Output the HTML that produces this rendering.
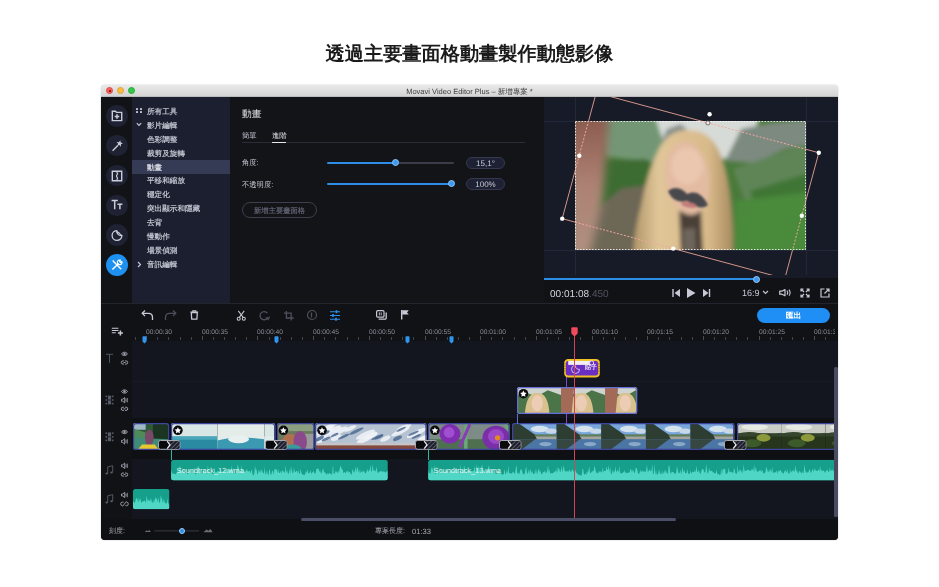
<!DOCTYPE html><html lang="zh-Hant"><head><meta charset="utf-8"><style>
*{margin:0;padding:0;box-sizing:border-box}
html,body{width:939px;height:587px;overflow:hidden;background:#fff}
body{position:relative;font-family:"Liberation Sans",sans-serif;text-rendering:geometricPrecision}
.abs{position:absolute}
.t{position:absolute;white-space:nowrap;line-height:1;-webkit-font-smoothing:antialiased;will-change:transform}
svg{position:absolute;overflow:visible}
</style></head><body>

<div class="t" style="left:0;width:939px;top:45.3px;text-align:center;font-size:19.2px;font-weight:bold;color:#1b1b1b">透過主要畫面格動畫製作動態影像</div>
<div class="abs" style="left:101px;top:85px;width:737px;height:455.3px;border-radius:4px;background:linear-gradient(#e0e0e0 0,#e0e0e0 10px,#111215 10px);box-shadow:0 0 1.5px rgba(0,0,0,0.3)"></div>
<div class="abs" style="left:101px;top:85px;width:737px;height:12px;border-radius:4px 4px 0 0;background:linear-gradient(#e9e9e9,#d4d4d4);border-bottom:1px solid #bcbcbc"></div>
<div class="abs" style="left:105.9px;top:87.3px;width:7px;height:7px;border-radius:50%;background:#fc605b;border:0.5px solid #de4a45"></div>
<div class="abs" style="left:117.2px;top:87.3px;width:7px;height:7px;border-radius:50%;background:#fdbc40;border:0.5px solid #dea236"></div>
<div class="abs" style="left:128.2px;top:87.3px;width:7px;height:7px;border-radius:50%;background:#34c84a;border:0.5px solid #27aa37"></div>
<div class="abs" style="left:108.6px;top:90px;width:2px;height:2px;border-radius:50%;background:#6a0a08"></div>
<div class="t" style="left:0;width:939px;top:87.6px;text-align:center;font-size:7.5px;color:#3d3d3d">Movavi Video Editor Plus – 新增專案 *</div>
<div class="abs" style="left:101px;top:97px;width:31px;height:206px;background:#121316"></div>
<div class="abs" style="left:132px;top:97px;width:98px;height:206px;background:#1c1f2f"></div>
<div class="abs" style="left:230px;top:97px;width:314px;height:206px;background:#131417"></div>
<div class="abs" style="left:544px;top:97px;width:294px;height:181px;background:#171a27"></div>
<div class="abs" style="left:544px;top:278px;width:294px;height:25px;background:#111215"></div>
<div class="abs" style="left:101px;top:303px;width:737px;height:1px;background:#23252e"></div>
<div class="abs" style="left:105.89999999999999px;top:104.8px;width:21.8px;height:21.8px;border-radius:50%;background:#1f2233"></div>
<svg style="left:108.8px;top:107.7px" width="16" height="16" viewBox="0 0 16 16"><path d="M3.3 3.2h3.2l1 1.2h5.2v8.2H3.3z" fill="none" stroke="#c9ccd9" stroke-width="1.4"/><path d="M8 6.2v4.6M5.7 8.5h4.6" stroke="#c9ccd9" stroke-width="1.6"/></svg>
<div class="abs" style="left:105.89999999999999px;top:134.7px;width:21.8px;height:21.8px;border-radius:50%;background:#1f2233"></div>
<svg style="left:108.8px;top:137.6px" width="16" height="16" viewBox="0 0 16 16"><polygon points="11.28,2.27 11.71,4.59 13.98,5.21 11.91,6.34 12.01,8.69 10.30,7.07 8.09,7.90 9.11,5.77 7.64,3.93 9.98,4.24" fill="#c9ccd9"/><path d="M8.8 7.6L3.6 12.8" stroke="#c9ccd9" stroke-width="1.4"/></svg>
<div class="abs" style="left:105.89999999999999px;top:164.6px;width:21.8px;height:21.8px;border-radius:50%;background:#1f2233"></div>
<svg style="left:108.8px;top:167.5px" width="16" height="16" viewBox="0 0 16 16"><path d="M3.3 3.2h9.4v9.6H3.3z" fill="none" stroke="#c9ccd9" stroke-width="1.4"/><path d="M7.4 3.2l1.2 2.4-1.2 2.4 1.2 2.4-1.2 2.4" fill="none" stroke="#c9ccd9" stroke-width="1.2"/></svg>
<div class="abs" style="left:105.89999999999999px;top:194.49999999999997px;width:21.8px;height:21.8px;border-radius:50%;background:#1f2233"></div>
<svg style="left:108.8px;top:197.39999999999998px" width="16" height="16" viewBox="0 0 16 16"><path d="M2.6 3.6h6.2M5.7 3.6v8.6M8.4 7.2h5M10.9 7.2v5" fill="none" stroke="#c9ccd9" stroke-width="1.5"/></svg>
<div class="abs" style="left:105.89999999999999px;top:224.4px;width:21.8px;height:21.8px;border-radius:50%;background:#1f2233"></div>
<svg style="left:108.8px;top:227.3px" width="16" height="16" viewBox="0 0 16 16"><path d="M12.9 8.6A4.9 4.9 0 1 1 7.6 3.6" fill="none" stroke="#c9ccd9" stroke-width="1.3"/><path d="M7.6 3.6C7.4 6.6 9.8 9 12.9 8.6C11.8 7.9 11 7.2 10.4 6.2C9.2 6 8.2 5 7.6 3.6z" fill="none" stroke="#c9ccd9" stroke-width="1.2" stroke-linejoin="round"/></svg>
<div class="abs" style="left:105.89999999999999px;top:254.29999999999998px;width:21.8px;height:21.8px;border-radius:50%;background:#1e90f0"></div>
<svg style="left:108.8px;top:257.2px" width="16" height="16" viewBox="0 0 16 16"><path d="M3.6 3.6l8.6 8.6" stroke="#ffffff" stroke-width="1.4"/><path d="M9.6 6.4L3.4 12.6" stroke="#ffffff" stroke-width="1.4"/><path d="M12.9 4.6A2.3 2.3 0 1 1 11.4 3.1L10.6 4.6 11.4 5.4z" fill="none" stroke="#ffffff" stroke-width="1.2" stroke-linejoin="round"/></svg>
<div class="t" style="left:147.3px;top:107.89999999999999px;font-size:7.6px;color:#bcbfcb;font-weight:700">所有工具</div>
<div class="abs" style="left:136.2px;top:107.8px;width:2.1px;height:2.1px;background:#c8cad6;border-radius:0.4px"></div>
<div class="abs" style="left:136.2px;top:111.3px;width:2.1px;height:2.1px;background:#c8cad6;border-radius:0.4px"></div>
<div class="abs" style="left:139.7px;top:107.8px;width:2.1px;height:2.1px;background:#c8cad6;border-radius:0.4px"></div>
<div class="abs" style="left:139.7px;top:111.3px;width:2.1px;height:2.1px;background:#c8cad6;border-radius:0.4px"></div>
<div class="t" style="left:147.3px;top:121.8px;font-size:7.6px;color:#bcbfcb;font-weight:700">影片編輯</div>
<svg style="left:136.2px;top:122.3px" width="6" height="5" viewBox="0 0 6 5"><path d="M0.8 1.2l2.2 2.2 2.2-2.2" fill="none" stroke="#c8cad6" stroke-width="1.2"/></svg>
<div class="t" style="left:147.3px;top:135.70000000000002px;font-size:7.6px;color:#bcbfcb;font-weight:700">色彩調整</div>
<div class="t" style="left:147.3px;top:149.60000000000002px;font-size:7.6px;color:#bcbfcb;font-weight:700">裁剪及旋轉</div>
<div class="abs" style="left:132px;top:160.39999999999998px;width:98px;height:13.6px;background:#353b54"></div>
<div class="t" style="left:147.3px;top:163.5px;font-size:7.6px;color:#d0d2dc;font-weight:700">動畫</div>
<div class="t" style="left:147.3px;top:177.4px;font-size:7.6px;color:#bcbfcb;font-weight:700">平移和縮放</div>
<div class="t" style="left:147.3px;top:191.3px;font-size:7.6px;color:#bcbfcb;font-weight:700">穩定化</div>
<div class="t" style="left:147.3px;top:205.2px;font-size:7.6px;color:#bcbfcb;font-weight:700">突出顯示和隱藏</div>
<div class="t" style="left:147.3px;top:219.10000000000002px;font-size:7.6px;color:#bcbfcb;font-weight:700">去背</div>
<div class="t" style="left:147.3px;top:233.0px;font-size:7.6px;color:#bcbfcb;font-weight:700">慢動作</div>
<div class="t" style="left:147.3px;top:246.9px;font-size:7.6px;color:#bcbfcb;font-weight:700">場景偵測</div>
<div class="t" style="left:147.3px;top:260.8px;font-size:7.6px;color:#bcbfcb;font-weight:700">音訊編輯</div>
<svg style="left:136px;top:261.0px" width="7" height="7" viewBox="0 0 7 7"><path d="M2 1l2.5 2.5L2 6" fill="none" stroke="#c3c6d2" stroke-width="1.2"/></svg>
<div class="t" style="left:241.7px;top:110.1px;font-size:9.75px;color:#e6e7ec;font-weight:500">動畫</div>
<div class="t" style="left:241.7px;top:132.2px;font-size:7.3px;color:#c3c6d2;font-weight:500">簡單</div>
<div class="t" style="left:271.9px;top:132.2px;font-size:7.3px;color:#e6e7ec;font-weight:500">進階</div>
<div class="abs" style="left:241.7px;top:142px;width:283.3px;height:1.2px;background:#2a2d38"></div>
<div class="abs" style="left:271.9px;top:141.6px;width:14.2px;height:1.8px;background:#e6e7ec"></div>
<div class="t" style="left:241.7px;top:159.2px;font-size:7.3px;color:#c3c6d2;font-weight:500">角度:</div>
<div class="t" style="left:241.7px;top:180.6px;font-size:7.3px;color:#c3c6d2;font-weight:500">不透明度:</div>
<div class="abs" style="left:326.6px;top:161.6px;width:69px;height:2px;background:#2c8ce6;border-radius:1px"></div>
<div class="abs" style="left:395.5px;top:161.6px;width:58.7px;height:2px;background:#3a3c48;border-radius:1px"></div>
<div class="abs" style="left:392px;top:159.1px;width:7px;height:7px;background:#3d9af0;border-radius:50%;border:1px solid #8cc4f8"></div>
<div class="abs" style="left:326.6px;top:182.6px;width:124.6px;height:2px;background:#2c8ce6;border-radius:1px"></div>
<div class="abs" style="left:447.7px;top:180.1px;width:7px;height:7px;background:#3d9af0;border-radius:50%;border:1px solid #8cc4f8"></div>
<div class="abs" style="left:465.8px;top:157.2px;width:39px;height:11.5px;border-radius:6px;background:#1e2134;border:1px solid #363a50"></div>
<div class="t" style="left:465.8px;width:39px;text-align:center;top:159.5px;font-size:8px;color:#c8cbd6">15,1°</div>
<div class="abs" style="left:465.8px;top:178.3px;width:39px;height:11.5px;border-radius:6px;background:#1e2134;border:1px solid #363a50"></div>
<div class="t" style="left:465.8px;width:39px;text-align:center;top:180.60000000000002px;font-size:8px;color:#c8cbd6">100%</div>
<div class="abs" style="left:241.6px;top:202.2px;width:75.2px;height:15.9px;border-radius:8px;border:1px solid #3c3f4c"></div>
<div class="t" style="left:241.6px;top:207.2px;font-size:7.3px;color:#585c6a;font-weight:700"><span style="display:inline-block;width:75.2px;text-align:center">新增主要畫面格</span></div>
<div class="abs" style="left:575px;top:97px;width:1px;height:178px;background:#22273a"></div>
<div class="abs" style="left:806px;top:97px;width:1px;height:178px;background:#22273a"></div>
<div class="abs" style="left:544px;top:121px;width:294px;height:1px;background:#22273a"></div>
<div class="abs" style="left:544px;top:250px;width:294px;height:1px;background:#22273a"></div>
<svg style="left:575px;top:121px" width="231" height="129" viewBox="0 0 231 129"><defs>
<filter id="bl1" x="-20%" y="-20%" width="140%" height="140%"><feGaussianBlur stdDeviation="2"/></filter>
<filter id="bl2" x="-50%" y="-20%" width="200%" height="140%"><feGaussianBlur stdDeviation="4"/></filter>
<filter id="bl0" x="-20%" y="-20%" width="140%" height="140%"><feGaussianBlur stdDeviation="1"/></filter>
<clipPath id="imgc"><rect width="231" height="129"/></clipPath></defs>
<g clip-path="url(#imgc)">
<rect width="231" height="129" fill="#4a7a3a"/>
<defs><linearGradient id="hairg" x1="0" y1="0" x2="1" y2="0"><stop offset="0" stop-color="#b09468"/><stop offset="0.25" stop-color="#e0c698"/><stop offset="0.75" stop-color="#d8ba8a"/><stop offset="1" stop-color="#a88a60"/></linearGradient>
<linearGradient id="handg" x1="0" y1="0" x2="0" y2="1"><stop offset="0" stop-color="#8a5a4e"/><stop offset="0.5" stop-color="#ad8274"/><stop offset="1" stop-color="#b09080"/></linearGradient></defs>
<g filter="url(#bl1)">
<path d="M70 -5 L185 -5 L172 32 L140 40 L92 36 Z" fill="#d7dbd7"/>
<path d="M82 30 L92 8 L106 3 L118 14 L116 32 Z" fill="#848e8a"/>
<path d="M20 -5 L80 -5 L96 45 L70 40 L30 35 Z" fill="#739774"/>
<path d="M25 40 L70 38 L96 50 L96 105 L25 110 Z" fill="#3e6c31"/>
<path d="M150 40 L166 8 L195 2 L240 -2 L240 22 L210 28 L180 42 Z" fill="#7d8a80"/>
<path d="M158 48 L240 20 L240 70 L170 80 Z" fill="#5f8556"/><path d="M175 70 L240 50 L240 100 L190 110 Z" fill="#3f7636"/>
<path d="M160 80 L240 70 L240 135 L160 135 Z" fill="#4a8a3a"/>
<path d="M8 135 L20 90 L46 68 L72 64 L78 135 Z" fill="#6d6856"/>
<path d="M111 9 C128 9 137 16 143 28 C150 42 154 60 156 80 C158 100 159 118 158 135 L58 135 C59 115 62 100 66 85 C70 65 74 48 82 32 C88 18 98 9 111 9 Z" fill="url(#hairg)"/>
<path d="M104 90 L126 88 L128 135 L106 135 Z" fill="#4c4038"/>
<path d="M108 108 L120 107 L121 135 L109 135 Z" fill="#6e665c"/>
<ellipse cx="112.5" cy="57" rx="22" ry="37" transform="rotate(-8 112.5 57)" fill="#e3bba2"/>
<ellipse cx="112" cy="45" rx="16" ry="18" fill="#ebc7b0"/>
</g>
<g filter="url(#bl0)">
<path d="M93 70 C100 64 108 68 112 73 C118 70 126 70 133 84 C125 90 118 84 112 80 C105 82 97 80 93 70 Z" fill="#4a4a4d"/>
<ellipse cx="114" cy="84" rx="8" ry="2.6" transform="rotate(10 114 84)" fill="#c27a78"/>
</g>
<g filter="url(#bl2)">
<path d="M-5 -5 L34 -5 C33 20 30 50 27 80 C24 100 18 118 15 135 L-5 135 Z" fill="url(#handg)"/>
</g>
<rect x="0.5" y="0.5" width="230" height="128" fill="none" stroke="rgba(255,255,255,0.8)" stroke-width="1" stroke-dasharray="1.5 1.5"/>
</g></svg>
<svg style="left:544px;top:97px" width="294" height="181" viewBox="544 97 294 181"><defs><clipPath id="pc"><rect x="544" y="97" width="294" height="178"/></clipPath>
<mask id="outimg"><rect x="544" y="97" width="294" height="181" fill="#fff"/><rect x="575" y="121" width="231" height="129" fill="#000"/></mask>
<mask id="inimg"><rect x="575" y="121" width="231" height="129" fill="#fff"/></mask></defs>
<g clip-path="url(#pc)" fill="none">
<polygon mask="url(#outimg)" points="596.2,92.75 818.8,152.75 784.8,278.65 562.2,218.65" stroke="#e7a394" stroke-width="0.9"/>
<polygon mask="url(#inimg)" points="596.2,92.75 818.8,152.75 784.8,278.65 562.2,218.65" stroke="#f0a8a0" stroke-width="1" stroke-dasharray="2 1.6"/>
</g>
<g fill="#fff"><circle cx="579.3" cy="155.7" r="2.2"/><circle cx="562.2" cy="218.65" r="2.2"/><circle cx="673.2" cy="248.6" r="2.2"/><circle cx="801.8" cy="215.7" r="2.2"/><circle cx="818.8" cy="152.75" r="2.2"/><circle cx="709.6" cy="114.3" r="2.2"/></g>
<circle cx="707.9" cy="122.9" r="2.1" fill="#e8e8e8" stroke="#444" stroke-width="0.7"/>
</svg>
<div class="abs" style="left:544px;top:278px;width:212px;height:2px;background:#2d8fe8"></div>
<div class="abs" style="left:756px;top:278px;width:82px;height:2px;background:#111215"></div>
<div class="abs" style="left:752.5px;top:276px;width:7px;height:7px;background:#3d9af0;border-radius:50%;border:1px solid #9ccaf5"></div>
<div class="t" style="left:549.8px;top:289.8px;font-size:10.05px;color:#d0d3de">00:01:08<span style="color:#50535f">.450</span></div>
<svg style="left:672px;top:288px" width="40" height="10" viewBox="0 0 40 10"><path d="M1 1v8" stroke="#c7cad6" stroke-width="1.4"/><path d="M8 1L2.5 5 8 9z" fill="#c7cad6"/><path d="M15 0L23.5 5 15 10z" fill="#c7cad6"/><path d="M31 1L36.5 5 31 9z" fill="#c7cad6"/><path d="M37.5 1v8" stroke="#c7cad6" stroke-width="1.4"/></svg>
<div class="t" style="left:742.4px;top:288.6px;font-size:9px;color:#c7cad6;">16:9</div>
<svg style="left:762px;top:290px" width="7" height="5" viewBox="0 0 7 5"><path d="M1 1l2.5 2.5L6 1" fill="none" stroke="#c7cad6" stroke-width="1.1"/></svg>
<svg style="left:778.6px;top:289.2px" width="12" height="7.4" viewBox="0 0 12 7.4"><path d="M0.7 2.2h2.2L6 0.6v6.2L2.9 5.2H0.7z" fill="none" stroke="#c7cad6" stroke-width="1.2" stroke-linejoin="round"/><path d="M8 1.6c.8 1.2.8 3 0 4.2M10 0.6c1.3 1.8 1.3 4.4 0 6.2" fill="none" stroke="#c7cad6" stroke-width="1.1"/></svg>
<svg style="left:800px;top:288px" width="10" height="10" viewBox="0 0 10 10"><path d="M1 3.5V1h2.5M6.5 1H9v2.5M9 6.5V9H6.5M3.5 9H1V6.5M1 1l3 3M9 1L6 4M9 9L6 6M1 9l3-3" fill="none" stroke="#c7cad6" stroke-width="1.2"/></svg>
<svg style="left:820px;top:288px" width="10" height="10" viewBox="0 0 10 10"><path d="M4.5 1H1v8h8V5.5M6 1h3v3M9 1L4.5 5.5" fill="none" stroke="#c7cad6" stroke-width="1.2"/></svg>
<svg style="left:141px;top:309px" width="13" height="12" viewBox="0 0 13 12"><path d="M4 1.5L1.2 4.3 4 7.1" fill="none" stroke="#c7cad6" stroke-width="1.3"/><path d="M1.5 4.3H7.5c2.5 0 4 1.8 4 4V11" fill="none" stroke="#c7cad6" stroke-width="1.3"/></svg>
<svg style="left:164px;top:309px" width="13" height="12" viewBox="0 0 13 12"><path d="M9 1.5l2.8 2.8L9 7.1" fill="none" stroke="#4d505c" stroke-width="1.3"/><path d="M11.5 4.3H5.5c-2.5 0-4 1.8-4 4V11" fill="none" stroke="#4d505c" stroke-width="1.3"/></svg>
<svg style="left:190.2px;top:310px" width="8.6" height="10" viewBox="0 0 8.6 10"><path d="M0.4 2h7.8M2.8 2V0.8h3V2" fill="none" stroke="#c7cad6" stroke-width="1.1"/><path d="M1.3 2.6h6l-.4 6.6H1.7z" fill="none" stroke="#c7cad6" stroke-width="1.3" stroke-linejoin="round"/></svg>
<svg style="left:236px;top:309.5px" width="10.5" height="11" viewBox="0 0 12 13"><path d="M2.5 1l6 8M9.5 1l-6 8" stroke="#c7cad6" stroke-width="1.2"/><circle cx="3" cy="10.3" r="1.8" fill="none" stroke="#c7cad6" stroke-width="1.2"/><circle cx="9" cy="10.3" r="1.8" fill="none" stroke="#c7cad6" stroke-width="1.2"/></svg>
<svg style="left:259.2px;top:311px" width="11" height="9.5" viewBox="0 0 11 9.5"><path d="M8.9 6.2A4.1 4.1 0 1 1 8.4 2.2" fill="none" stroke="#4d505c" stroke-width="1.3"/><path d="M6.6 6.4L9 8.6 10.6 5.6" fill="none" stroke="#4d505c" stroke-width="1.2"/></svg>
<svg style="left:284px;top:310.6px" width="10" height="9.4" viewBox="0 0 10 9.4"><path d="M2.4 0v7h7.4M0 2.2h7.2v7.2" fill="none" stroke="#4d505c" stroke-width="1.3"/></svg>
<svg style="left:306px;top:309px" width="12" height="12" viewBox="0 0 12 12"><circle cx="6" cy="6" r="4.5" fill="none" stroke="#4d505c" stroke-width="1.2"/><path d="M5.5 3.5v5" stroke="#4d505c" stroke-width="1.2"/></svg>
<svg style="left:330px;top:309.5px" width="10" height="11" viewBox="0 0 10 11"><path d="M0 1.8h10M0 5.5h10M0 9.2h10" stroke="#2d8fe8" stroke-width="1.1"/><path d="M6.5 0.3v3M3 4v3M6 7.7v3" stroke="#2d8fe8" stroke-width="1.6"/></svg>
<svg style="left:376px;top:310.2px" width="11" height="10" viewBox="0 0 11 10"><rect x="0.6" y="0.6" width="7.4" height="6.6" rx="1.2" fill="none" stroke="#c7cad6" stroke-width="1.2"/><path d="M2.6 9.2h6.4a1.2 1.2 0 0 0 1.2-1.2V2.6" fill="none" stroke="#c7cad6" stroke-width="1.3"/><path d="M3.4 2.4v3M5.2 2.4v3" stroke="#c7cad6" stroke-width="0.9"/></svg>
<svg style="left:401px;top:310.2px" width="8" height="9.4" viewBox="0 0 8 9.4"><path d="M0.7 0v9.4" stroke="#c7cad6" stroke-width="1.4"/><path d="M1.2 0.3h6.6L6 2.4 7.8 4.6H1.2z" fill="#c7cad6"/></svg>
<div class="abs" style="left:756.7px;top:308.1px;width:72.9px;height:15px;border-radius:8px;background:#1f8ef5"></div>
<div class="t" style="left:757.2px;width:72.9px;text-align:center;top:312px;font-size:7.8px;color:#fff;font-weight:700">匯出</div>
<svg style="left:0;top:0" width="939" height="587" viewBox="0 0 939 587"><path d="M111.8 328.3h6.6M111.8 330.5h6.6M111.8 332.8h4" stroke="#c7cad6" stroke-width="1.1"/><path d="M120.4 330.4v5M117.9 332.9h5" stroke="#c7cad6" stroke-width="1.5"/></svg>
<div class="abs" style="left:0;top:0;width:939px;height:587px;clip-path:inset(320px 104px 246px 132px)">
<div class="abs" style="left:134.96px;top:336.6px;width:1px;height:3.8px;background:#41444e"></div>
<div class="abs" style="left:146.1px;top:335.6px;width:1px;height:4.8px;background:#4a4d58"></div>
<div class="abs" style="left:157.24px;top:336.6px;width:1px;height:3.8px;background:#41444e"></div>
<div class="abs" style="left:168.37px;top:336.6px;width:1px;height:3.8px;background:#41444e"></div>
<div class="abs" style="left:179.51px;top:336.6px;width:1px;height:3.8px;background:#41444e"></div>
<div class="abs" style="left:190.64px;top:336.6px;width:1px;height:3.8px;background:#41444e"></div>
<div class="abs" style="left:201.78px;top:335.6px;width:1px;height:4.8px;background:#4a4d58"></div>
<div class="abs" style="left:212.92px;top:336.6px;width:1px;height:3.8px;background:#41444e"></div>
<div class="abs" style="left:224.05px;top:336.6px;width:1px;height:3.8px;background:#41444e"></div>
<div class="abs" style="left:235.19px;top:336.6px;width:1px;height:3.8px;background:#41444e"></div>
<div class="abs" style="left:246.32px;top:336.6px;width:1px;height:3.8px;background:#41444e"></div>
<div class="abs" style="left:257.46px;top:335.6px;width:1px;height:4.8px;background:#4a4d58"></div>
<div class="abs" style="left:268.6px;top:336.6px;width:1px;height:3.8px;background:#41444e"></div>
<div class="abs" style="left:279.73px;top:336.6px;width:1px;height:3.8px;background:#41444e"></div>
<div class="abs" style="left:290.87px;top:336.6px;width:1px;height:3.8px;background:#41444e"></div>
<div class="abs" style="left:302.0px;top:336.6px;width:1px;height:3.8px;background:#41444e"></div>
<div class="abs" style="left:313.14px;top:335.6px;width:1px;height:4.8px;background:#4a4d58"></div>
<div class="abs" style="left:324.28px;top:336.6px;width:1px;height:3.8px;background:#41444e"></div>
<div class="abs" style="left:335.41px;top:336.6px;width:1px;height:3.8px;background:#41444e"></div>
<div class="abs" style="left:346.55px;top:336.6px;width:1px;height:3.8px;background:#41444e"></div>
<div class="abs" style="left:357.68px;top:336.6px;width:1px;height:3.8px;background:#41444e"></div>
<div class="abs" style="left:368.82px;top:335.6px;width:1px;height:4.8px;background:#4a4d58"></div>
<div class="abs" style="left:379.96px;top:336.6px;width:1px;height:3.8px;background:#41444e"></div>
<div class="abs" style="left:391.09px;top:336.6px;width:1px;height:3.8px;background:#41444e"></div>
<div class="abs" style="left:402.23px;top:336.6px;width:1px;height:3.8px;background:#41444e"></div>
<div class="abs" style="left:413.36px;top:336.6px;width:1px;height:3.8px;background:#41444e"></div>
<div class="abs" style="left:424.5px;top:335.6px;width:1px;height:4.8px;background:#4a4d58"></div>
<div class="abs" style="left:435.64px;top:336.6px;width:1px;height:3.8px;background:#41444e"></div>
<div class="abs" style="left:446.77px;top:336.6px;width:1px;height:3.8px;background:#41444e"></div>
<div class="abs" style="left:457.91px;top:336.6px;width:1px;height:3.8px;background:#41444e"></div>
<div class="abs" style="left:469.04px;top:336.6px;width:1px;height:3.8px;background:#41444e"></div>
<div class="abs" style="left:480.18px;top:335.6px;width:1px;height:4.8px;background:#4a4d58"></div>
<div class="abs" style="left:491.32px;top:336.6px;width:1px;height:3.8px;background:#41444e"></div>
<div class="abs" style="left:502.45px;top:336.6px;width:1px;height:3.8px;background:#41444e"></div>
<div class="abs" style="left:513.59px;top:336.6px;width:1px;height:3.8px;background:#41444e"></div>
<div class="abs" style="left:524.72px;top:336.6px;width:1px;height:3.8px;background:#41444e"></div>
<div class="abs" style="left:535.86px;top:335.6px;width:1px;height:4.8px;background:#4a4d58"></div>
<div class="abs" style="left:547.0px;top:336.6px;width:1px;height:3.8px;background:#41444e"></div>
<div class="abs" style="left:558.13px;top:336.6px;width:1px;height:3.8px;background:#41444e"></div>
<div class="abs" style="left:569.27px;top:336.6px;width:1px;height:3.8px;background:#41444e"></div>
<div class="abs" style="left:580.4px;top:336.6px;width:1px;height:3.8px;background:#41444e"></div>
<div class="abs" style="left:591.54px;top:335.6px;width:1px;height:4.8px;background:#4a4d58"></div>
<div class="abs" style="left:602.68px;top:336.6px;width:1px;height:3.8px;background:#41444e"></div>
<div class="abs" style="left:613.81px;top:336.6px;width:1px;height:3.8px;background:#41444e"></div>
<div class="abs" style="left:624.95px;top:336.6px;width:1px;height:3.8px;background:#41444e"></div>
<div class="abs" style="left:636.08px;top:336.6px;width:1px;height:3.8px;background:#41444e"></div>
<div class="abs" style="left:647.22px;top:335.6px;width:1px;height:4.8px;background:#4a4d58"></div>
<div class="abs" style="left:658.36px;top:336.6px;width:1px;height:3.8px;background:#41444e"></div>
<div class="abs" style="left:669.49px;top:336.6px;width:1px;height:3.8px;background:#41444e"></div>
<div class="abs" style="left:680.63px;top:336.6px;width:1px;height:3.8px;background:#41444e"></div>
<div class="abs" style="left:691.76px;top:336.6px;width:1px;height:3.8px;background:#41444e"></div>
<div class="abs" style="left:702.9px;top:335.6px;width:1px;height:4.8px;background:#4a4d58"></div>
<div class="abs" style="left:714.04px;top:336.6px;width:1px;height:3.8px;background:#41444e"></div>
<div class="abs" style="left:725.17px;top:336.6px;width:1px;height:3.8px;background:#41444e"></div>
<div class="abs" style="left:736.31px;top:336.6px;width:1px;height:3.8px;background:#41444e"></div>
<div class="abs" style="left:747.44px;top:336.6px;width:1px;height:3.8px;background:#41444e"></div>
<div class="abs" style="left:758.58px;top:335.6px;width:1px;height:4.8px;background:#4a4d58"></div>
<div class="abs" style="left:769.72px;top:336.6px;width:1px;height:3.8px;background:#41444e"></div>
<div class="abs" style="left:780.85px;top:336.6px;width:1px;height:3.8px;background:#41444e"></div>
<div class="abs" style="left:791.99px;top:336.6px;width:1px;height:3.8px;background:#41444e"></div>
<div class="abs" style="left:803.12px;top:336.6px;width:1px;height:3.8px;background:#41444e"></div>
<div class="abs" style="left:814.26px;top:335.6px;width:1px;height:4.8px;background:#4a4d58"></div>
<div class="abs" style="left:825.4px;top:336.6px;width:1px;height:3.8px;background:#41444e"></div>
<div class="t" style="left:146.1px;top:330.1px;font-size:6.65px;color:#8d909c;">00:00:30</div>
<div class="t" style="left:201.78px;top:330.1px;font-size:6.65px;color:#8d909c;">00:00:35</div>
<div class="t" style="left:257.46px;top:330.1px;font-size:6.65px;color:#8d909c;">00:00:40</div>
<div class="t" style="left:313.14px;top:330.1px;font-size:6.65px;color:#8d909c;">00:00:45</div>
<div class="t" style="left:368.82px;top:330.1px;font-size:6.65px;color:#8d909c;">00:00:50</div>
<div class="t" style="left:424.5px;top:330.1px;font-size:6.65px;color:#8d909c;">00:00:55</div>
<div class="t" style="left:480.18px;top:330.1px;font-size:6.65px;color:#8d909c;">00:01:00</div>
<div class="t" style="left:535.86px;top:330.1px;font-size:6.65px;color:#8d909c;">00:01:05</div>
<div class="t" style="left:591.54px;top:330.1px;font-size:6.65px;color:#8d909c;">00:01:10</div>
<div class="t" style="left:647.22px;top:330.1px;font-size:6.65px;color:#8d909c;">00:01:15</div>
<div class="t" style="left:702.9px;top:330.1px;font-size:6.65px;color:#8d909c;">00:01:20</div>
<div class="t" style="left:758.58px;top:330.1px;font-size:6.65px;color:#8d909c;">00:01:25</div>
<div class="t" style="left:814.26px;top:330.1px;font-size:6.65px;color:#8d909c;">00:01:30</div>
<div class="t" style="left:869.94px;top:330.1px;font-size:6.65px;color:#8d909c;">00:01:35</div>
</div>
<div class="abs" style="left:132px;top:341px;width:706px;height:178px;background:#14161f"></div>
<div class="abs" style="left:101px;top:341px;width:31px;height:178px;background:#111215"></div>
<div class="abs" style="left:132px;top:380.5px;width:706px;height:1px;background:#181a24"></div>
<div class="abs" style="left:132px;top:417.5px;width:706px;height:41.8px;background:#0f1014"></div>
<div class="abs" style="left:101px;top:519px;width:737px;height:21.3px;background:#0f1013;border-radius:0 0 4px 4px"></div>
<svg style="left:142.0px;top:335.5px" width="5" height="8" viewBox="0 0 5 8"><path d="M0.5 1a.8.8 0 0 1 .8-.8h2.4a.8.8 0 0 1 .8.8V5.5L2.5 7.6 0.5 5.5z" fill="#2f95ee"/></svg>
<svg style="left:274.09999999999997px;top:335.5px" width="5" height="8" viewBox="0 0 5 8"><path d="M0.5 1a.8.8 0 0 1 .8-.8h2.4a.8.8 0 0 1 .8.8V5.5L2.5 7.6 0.5 5.5z" fill="#2f95ee"/></svg>
<svg style="left:405.09999999999997px;top:335.5px" width="5" height="8" viewBox="0 0 5 8"><path d="M0.5 1a.8.8 0 0 1 .8-.8h2.4a.8.8 0 0 1 .8.8V5.5L2.5 7.6 0.5 5.5z" fill="#2f95ee"/></svg>
<svg style="left:449.3px;top:335.5px" width="5" height="8" viewBox="0 0 5 8"><path d="M0.5 1a.8.8 0 0 1 .8-.8h2.4a.8.8 0 0 1 .8.8V5.5L2.5 7.6 0.5 5.5z" fill="#2f95ee"/></svg>
<div class="abs" style="left:0;top:0;width:939px;height:587px;clip-path:inset(341px 104.5px 68px 132px)">
<svg style="left:133px;top:423.1px" width="36.20" height="27.00" viewBox="133 423.1 36.20 27.00"><defs><clipPath id="c182"><rect x="133" y="423.1" width="36.20" height="27.00" rx="2.5"/></clipPath><filter id="fc182" x="-5%" y="-5%" width="110%" height="110%"><feGaussianBlur stdDeviation="0.6"/></filter></defs><g clip-path="url(#c182)"><g filter="url(#fc182)"><rect x="133" y="423.1" width="36.2" height="27" fill="#2f5a38"/><rect x="133" y="423.1" width="12.67" height="6.75" fill="#9fb8c8"/><path d="M133 428.5 L145.67 432.55 L145.67 450.1 L133 450.1z" fill="#4f8a5a"/><rect x="152.91" y="423.1" width="16.290000000000003" height="27" fill="#1f3424"/><path d="M133 437.95000000000005 L169.2 439.3 L169.2 450.1 L133 450.1z" fill="#3f8a78"/><ellipse cx="149.29" cy="437.95000000000005" rx="4.344" ry="8.1" fill="#7a4a6a"/><path d="M137.344 450.1 L142.05 444.70000000000005 L154.72 444.70000000000005 L159.064 450.1z" fill="#e8c830"/></g></g><rect x="133.6" y="423.70000000000005" width="35.00" height="25.80" rx="2.5" fill="none" stroke="#3d469c" stroke-width="1.2"/></svg>
<svg style="left:171px;top:423.1px" width="104.20" height="27.00" viewBox="171 423.1 104.20 27.00"><defs><clipPath id="c183"><rect x="171" y="423.1" width="104.20" height="27.00" rx="2.5"/></clipPath><filter id="fc183" x="-5%" y="-5%" width="110%" height="110%"><feGaussianBlur stdDeviation="0.6"/></filter></defs><g clip-path="url(#c183)"><g filter="url(#fc183)"><rect x="171" y="423.1" width="46.5" height="27" fill="#d9e6e6"/><rect x="171" y="436.6" width="46.5" height="13.5" fill="#2b8aa2"/><rect x="171" y="436.6" width="46.5" height="3.2399999999999998" fill="#4aa6b8"/><rect x="217.5" y="423.1" width="47" height="27" fill="#e4ecea"/><path d="M217.5 440.65000000000003 Q236.3 435.25 264.5 439.3 L264.5 450.1 L217.5 450.1z" fill="#3a9ab2"/><ellipse cx="238.65" cy="439.3" rx="10.34" ry="4.05" fill="#e8f0f0"/><rect x="264.5" y="423.1" width="12" height="27" fill="#d9e6e6"/><rect x="264.5" y="436.6" width="12" height="13.5" fill="#e0ecea"/><rect x="264.5" y="436.6" width="12" height="3.2399999999999998" fill="#e0ecea"/></g></g><rect x="171.6" y="423.70000000000005" width="103.00" height="25.80" rx="2.5" fill="none" stroke="#3d469c" stroke-width="1.2"/></svg>
<svg style="left:277px;top:423.1px" width="37.40" height="27.00" viewBox="277 423.1 37.40 27.00"><defs><clipPath id="c184"><rect x="277" y="423.1" width="37.40" height="27.00" rx="2.5"/></clipPath><filter id="fc184" x="-5%" y="-5%" width="110%" height="110%"><feGaussianBlur stdDeviation="0.6"/></filter></defs><g clip-path="url(#c184)"><g filter="url(#fc184)"><rect x="277" y="423.1" width="37.4" height="27" fill="#6a7a5a"/><rect x="277" y="423.1" width="37.4" height="8.1" fill="#8aa080"/><rect x="303.18" y="433.90000000000003" width="11.219999999999999" height="16.2" fill="#9a9a98"/><ellipse cx="290.09" cy="443.35" rx="8.228" ry="9.45" fill="#b07050"/><ellipse cx="300.188" cy="442.0" rx="6.731999999999999" ry="10.8" fill="#8a4a8a"/><ellipse cx="291.96" cy="448.75" rx="9.35" ry="4.05" fill="#3a9a9a"/></g></g><rect x="277.6" y="423.70000000000005" width="36.20" height="25.80" rx="2.5" fill="none" stroke="#3d469c" stroke-width="1.2"/></svg>
<svg style="left:315.2px;top:423.1px" width="111.60" height="27.00" viewBox="315.2 423.1 111.60 27.00"><defs><clipPath id="c185"><rect x="315.2" y="423.1" width="111.60" height="27.00" rx="2.5"/></clipPath><filter id="fc185" x="-5%" y="-5%" width="110%" height="110%"><feGaussianBlur stdDeviation="0.6"/></filter></defs><g clip-path="url(#c185)"><g filter="url(#fc185)"><rect x="315.2" y="423.1" width="111.6" height="27" fill="#b4c2d2"/><ellipse cx="365.7" cy="434.6" rx="10.5" ry="2.5" transform="rotate(-25 365.7 434.6)" fill="#eef2f6" opacity="0.9"/><ellipse cx="371.9" cy="435.1" rx="6.1" ry="2.5" transform="rotate(-25 371.9 435.1)" fill="#eef2f6" opacity="0.9"/><ellipse cx="385.5" cy="438.8" rx="5.6" ry="2.2" transform="rotate(-25 385.5 438.8)" fill="#eef2f6" opacity="0.9"/><ellipse cx="325.3" cy="439.1" rx="9.2" ry="1.9" transform="rotate(-25 325.3 439.1)" fill="#eef2f6" opacity="0.9"/><ellipse cx="424.8" cy="441.9" rx="8.9" ry="2.7" transform="rotate(-25 424.8 441.9)" fill="#eef2f6" opacity="0.9"/><ellipse cx="332.8" cy="424.7" rx="8.2" ry="1.9" transform="rotate(-25 332.8 424.7)" fill="#eef2f6" opacity="0.9"/><ellipse cx="336.4" cy="428.8" rx="5.2" ry="2.4" transform="rotate(-25 336.4 428.8)" fill="#eef2f6" opacity="0.9"/><ellipse cx="364.4" cy="439.7" rx="8.1" ry="2.7" transform="rotate(-25 364.4 439.7)" fill="#eef2f6" opacity="0.9"/><ellipse cx="371.0" cy="436.4" rx="7.7" ry="2.2" transform="rotate(-25 371.0 436.4)" fill="#eef2f6" opacity="0.9"/><ellipse cx="426.5" cy="442.5" rx="10.0" ry="2.8" transform="rotate(-25 426.5 442.5)" fill="#eef2f6" opacity="0.9"/><ellipse cx="350.4" cy="428.6" rx="6.7" ry="1.9" transform="rotate(-25 350.4 428.6)" fill="#eef2f6" opacity="0.9"/><ellipse cx="400.7" cy="431.7" rx="10.1" ry="2.3" transform="rotate(-25 400.7 431.7)" fill="#eef2f6" opacity="0.9"/><ellipse cx="422.1" cy="439.8" rx="5.0" ry="2.1" transform="rotate(-25 422.1 439.8)" fill="#eef2f6" opacity="0.9"/><ellipse cx="416.8" cy="433.0" rx="10.9" ry="2.4" transform="rotate(-25 416.8 433.0)" fill="#eef2f6" opacity="0.9"/><ellipse cx="323.4" cy="435.8" rx="9.7" ry="2.2" transform="rotate(-25 323.4 435.8)" fill="#eef2f6" opacity="0.9"/><ellipse cx="324.9" cy="430.5" rx="10.8" ry="2.9" transform="rotate(-25 324.9 430.5)" fill="#eef2f6" opacity="0.9"/><ellipse cx="328.4" cy="428.9" rx="5.6" ry="1.9" transform="rotate(-25 328.4 428.9)" fill="#eef2f6" opacity="0.9"/><ellipse cx="404.1" cy="427.7" rx="8.4" ry="2.4" transform="rotate(-25 404.1 427.7)" fill="#eef2f6" opacity="0.9"/><ellipse cx="336.5" cy="437.7" rx="5.8" ry="2.7" transform="rotate(-25 336.5 437.7)" fill="#eef2f6" opacity="0.9"/><ellipse cx="328.2" cy="432.1" rx="6.3" ry="2.2" transform="rotate(-25 328.2 432.1)" fill="#eef2f6" opacity="0.9"/><ellipse cx="423.6" cy="439.0" rx="6.8" ry="3.0" transform="rotate(-25 423.6 439.0)" fill="#eef2f6" opacity="0.9"/><ellipse cx="338.7" cy="431.6" rx="10.1" ry="2.7" transform="rotate(-25 338.7 431.6)" fill="#eef2f6" opacity="0.9"/><ellipse cx="326.4" cy="439.1" rx="4.9" ry="1.3" transform="rotate(-25 326.4 439.1)" fill="#4e6a90" opacity="0.85"/><ellipse cx="401.4" cy="429.3" rx="5.2" ry="1.1" transform="rotate(-25 401.4 429.3)" fill="#4e6a90" opacity="0.85"/><ellipse cx="325.3" cy="433.1" rx="5.0" ry="1.6" transform="rotate(-25 325.3 433.1)" fill="#4e6a90" opacity="0.85"/><ellipse cx="356.7" cy="431.2" rx="7.8" ry="1.5" transform="rotate(-25 356.7 431.2)" fill="#4e6a90" opacity="0.85"/><ellipse cx="379.3" cy="437.3" rx="4.7" ry="1.2" transform="rotate(-25 379.3 437.3)" fill="#4e6a90" opacity="0.85"/><ellipse cx="416.6" cy="436.6" rx="5.0" ry="1.2" transform="rotate(-25 416.6 436.6)" fill="#4e6a90" opacity="0.85"/><ellipse cx="397.7" cy="438.4" rx="4.8" ry="2.0" transform="rotate(-25 397.7 438.4)" fill="#4e6a90" opacity="0.85"/><ellipse cx="413.7" cy="433.4" rx="5.7" ry="1.1" transform="rotate(-25 413.7 433.4)" fill="#4e6a90" opacity="0.85"/><ellipse cx="319.5" cy="438.7" rx="5.0" ry="1.7" transform="rotate(-25 319.5 438.7)" fill="#4e6a90" opacity="0.85"/><ellipse cx="343.9" cy="436.7" rx="6.4" ry="1.3" transform="rotate(-25 343.9 436.7)" fill="#4e6a90" opacity="0.85"/><ellipse cx="334.8" cy="435.1" rx="4.3" ry="1.2" transform="rotate(-25 334.8 435.1)" fill="#4e6a90" opacity="0.85"/><ellipse cx="377.6" cy="437.1" rx="6.5" ry="1.3" transform="rotate(-25 377.6 437.1)" fill="#4e6a90" opacity="0.85"/><rect x="315.2" y="445.51000000000005" width="111.6" height="4.590000000000001" fill="#84483a"/><rect x="315.2" y="443.08000000000004" width="111.6" height="1.8900000000000001" fill="#c8c4c4"/></g></g><rect x="315.8" y="423.70000000000005" width="110.40" height="25.80" rx="2.5" fill="none" stroke="#3d469c" stroke-width="1.2"/></svg>
<svg style="left:428.3px;top:423.1px" width="81.70" height="27.00" viewBox="428.3 423.1 81.70 27.00"><defs><clipPath id="c186"><rect x="428.3" y="423.1" width="81.70" height="27.00" rx="2.5"/></clipPath><filter id="fc186" x="-5%" y="-5%" width="110%" height="110%"><feGaussianBlur stdDeviation="0.6"/></filter></defs><g clip-path="url(#c186)"><g filter="url(#fc186)"><rect x="428.3" y="423.1" width="44" height="27" fill="#7d8c86"/><rect x="428.3" y="439.3" width="44" height="10.8" fill="#4f7050"/><rect x="464.38" y="423.1" width="3.52" height="27" fill="#6aa878"/><ellipse cx="450.3" cy="433.90000000000003" rx="10.559999999999999" ry="9.719999999999999" fill="#7f2eb0"/><ellipse cx="449.42" cy="432.55" rx="5.279999999999999" ry="5.4" fill="#a050d0"/><path d="M459.98 447.40000000000003 L470.1 424.45000000000005" stroke="#8a3ab8" stroke-width="3"/><rect x="472.3" y="423.1" width="40" height="27" fill="#7d8c86"/><rect x="472.3" y="439.3" width="40" height="10.8" fill="#4f7050"/><rect x="505.1" y="423.1" width="3.2" height="27" fill="#6aa878"/><ellipse cx="496.3" cy="437.95000000000005" rx="13.600000000000001" ry="12.15" fill="#7a2ea8"/><ellipse cx="496.3" cy="436.6" rx="8.0" ry="7.5600000000000005" fill="#9a46c8"/><circle cx="497.90000000000003" cy="437.95000000000005" r="2.7" fill="#e08a20"/></g></g><rect x="428.90000000000003" y="423.70000000000005" width="80.50" height="25.80" rx="2.5" fill="none" stroke="#3d469c" stroke-width="1.2"/></svg>
<svg style="left:511.7px;top:423.1px" width="222.30" height="27.00" viewBox="511.7 423.1 222.30 27.00"><defs><clipPath id="c187"><rect x="511.7" y="423.1" width="222.30" height="27.00" rx="2.5"/></clipPath><filter id="fc187" x="-5%" y="-5%" width="110%" height="110%"><feGaussianBlur stdDeviation="0.6"/></filter></defs><g clip-path="url(#c187)"><g filter="url(#fc187)"><rect x="511.7" y="423.1" width="44.6" height="27" fill="#78a6da"/><ellipse cx="539.352" cy="429.04" rx="8.92" ry="3.2399999999999998" fill="#d4e2ee"/><ellipse cx="550.948" cy="431.20000000000005" rx="6.244000000000001" ry="2.7" fill="#c8d8e8"/><rect x="527.31" y="434.44" width="28.990000000000002" height="4.32" fill="#5f7c5a"/><rect x="525.08" y="436.6" width="31.22" height="3.2399999999999998" fill="#a4a49c"/><rect x="511.7" y="439.3" width="44.6" height="10.8" fill="#4b74a4"/><path d="M511.7 423.1 L517.944 423.1 L534.0 434.44 L536.676 439.3 L511.7 439.3z" fill="#2d3d33"/><path d="M511.7 439.3 L534.8919999999999 439.3 L520.62 450.1 L511.7 450.1z" fill="#34473f"/><ellipse cx="545.15" cy="444.16" rx="6.244000000000001" ry="2.16" fill="#8aa8c8"/><rect x="556.3" y="423.1" width="44.6" height="27" fill="#78a6da"/><ellipse cx="583.952" cy="429.04" rx="8.92" ry="3.2399999999999998" fill="#d4e2ee"/><ellipse cx="595.548" cy="431.20000000000005" rx="6.244000000000001" ry="2.7" fill="#c8d8e8"/><rect x="571.91" y="434.44" width="28.990000000000002" height="4.32" fill="#5f7c5a"/><rect x="569.68" y="436.6" width="31.22" height="3.2399999999999998" fill="#a4a49c"/><rect x="556.3" y="439.3" width="44.6" height="10.8" fill="#4b74a4"/><path d="M556.3 423.1 L562.544 423.1 L578.5999999999999 434.44 L581.276 439.3 L556.3 439.3z" fill="#2d3d33"/><path d="M556.3 439.3 L579.492 439.3 L565.2199999999999 450.1 L556.3 450.1z" fill="#34473f"/><ellipse cx="589.75" cy="444.16" rx="6.244000000000001" ry="2.16" fill="#8aa8c8"/><rect x="600.9" y="423.1" width="44.6" height="27" fill="#78a6da"/><ellipse cx="628.552" cy="429.04" rx="8.92" ry="3.2399999999999998" fill="#d4e2ee"/><ellipse cx="640.148" cy="431.20000000000005" rx="6.244000000000001" ry="2.7" fill="#c8d8e8"/><rect x="616.51" y="434.44" width="28.990000000000002" height="4.32" fill="#5f7c5a"/><rect x="614.28" y="436.6" width="31.22" height="3.2399999999999998" fill="#a4a49c"/><rect x="600.9" y="439.3" width="44.6" height="10.8" fill="#4b74a4"/><path d="M600.9 423.1 L607.144 423.1 L623.1999999999999 434.44 L625.876 439.3 L600.9 439.3z" fill="#2d3d33"/><path d="M600.9 439.3 L624.092 439.3 L609.8199999999999 450.1 L600.9 450.1z" fill="#34473f"/><ellipse cx="634.35" cy="444.16" rx="6.244000000000001" ry="2.16" fill="#8aa8c8"/><rect x="645.5" y="423.1" width="44.6" height="27" fill="#78a6da"/><ellipse cx="673.152" cy="429.04" rx="8.92" ry="3.2399999999999998" fill="#d4e2ee"/><ellipse cx="684.748" cy="431.20000000000005" rx="6.244000000000001" ry="2.7" fill="#c8d8e8"/><rect x="661.11" y="434.44" width="28.990000000000002" height="4.32" fill="#5f7c5a"/><rect x="658.88" y="436.6" width="31.22" height="3.2399999999999998" fill="#a4a49c"/><rect x="645.5" y="439.3" width="44.6" height="10.8" fill="#4b74a4"/><path d="M645.5 423.1 L651.744 423.1 L667.8 434.44 L670.476 439.3 L645.5 439.3z" fill="#2d3d33"/><path d="M645.5 439.3 L668.692 439.3 L654.42 450.1 L645.5 450.1z" fill="#34473f"/><ellipse cx="678.95" cy="444.16" rx="6.244000000000001" ry="2.16" fill="#8aa8c8"/><rect x="690.1" y="423.1" width="44.6" height="27" fill="#78a6da"/><ellipse cx="717.7520000000001" cy="429.04" rx="8.92" ry="3.2399999999999998" fill="#d4e2ee"/><ellipse cx="729.3480000000001" cy="431.20000000000005" rx="6.244000000000001" ry="2.7" fill="#c8d8e8"/><rect x="705.71" y="434.44" width="28.990000000000002" height="4.32" fill="#5f7c5a"/><rect x="703.48" y="436.6" width="31.22" height="3.2399999999999998" fill="#a4a49c"/><rect x="690.1" y="439.3" width="44.6" height="10.8" fill="#4b74a4"/><path d="M690.1 423.1 L696.344 423.1 L712.4 434.44 L715.076 439.3 L690.1 439.3z" fill="#2d3d33"/><path d="M690.1 439.3 L713.292 439.3 L699.02 450.1 L690.1 450.1z" fill="#34473f"/><ellipse cx="723.5500000000001" cy="444.16" rx="6.244000000000001" ry="2.16" fill="#8aa8c8"/><rect x="734.7" y="423.1" width="44.6" height="27" fill="#78a6da"/><ellipse cx="762.3520000000001" cy="429.04" rx="8.92" ry="3.2399999999999998" fill="#d4e2ee"/><ellipse cx="773.9480000000001" cy="431.20000000000005" rx="6.244000000000001" ry="2.7" fill="#c8d8e8"/><rect x="750.3100000000001" y="434.44" width="28.990000000000002" height="4.32" fill="#5f7c5a"/><rect x="748.08" y="436.6" width="31.22" height="3.2399999999999998" fill="#a4a49c"/><rect x="734.7" y="439.3" width="44.6" height="10.8" fill="#4b74a4"/><path d="M734.7 423.1 L740.9440000000001 423.1 L757.0 434.44 L759.676 439.3 L734.7 439.3z" fill="#2d3d33"/><path d="M734.7 439.3 L757.892 439.3 L743.62 450.1 L734.7 450.1z" fill="#34473f"/><ellipse cx="768.1500000000001" cy="444.16" rx="6.244000000000001" ry="2.16" fill="#8aa8c8"/></g></g><rect x="512.3" y="423.70000000000005" width="221.10" height="25.80" rx="2.5" fill="none" stroke="#3d469c" stroke-width="1.2"/></svg>
<svg style="left:737.1px;top:423.1px" width="132.90" height="27.00" viewBox="737.1 423.1 132.90 27.00"><defs><clipPath id="c188"><rect x="737.1" y="423.1" width="132.90" height="27.00" rx="2.5"/></clipPath><filter id="fc188" x="-5%" y="-5%" width="110%" height="110%"><feGaussianBlur stdDeviation="0.6"/></filter></defs><g clip-path="url(#c188)"><g filter="url(#fc188)"><rect x="737.1" y="423.1" width="44.2" height="27" fill="#26361f"/><rect x="737.1" y="423.1" width="44.2" height="10.26" fill="#c9cdc6"/><ellipse cx="754.78" cy="427.15000000000003" rx="13.26" ry="3.2399999999999998" fill="#e6e8e2"/><path d="M737.1 433.90000000000003 Q748.15 430.66 759.2 433.36 T781.3000000000001 432.82000000000005 L781.3000000000001 436.6 L737.1 436.6z" fill="#34442e"/><ellipse cx="763.62" cy="437.95000000000005" rx="7.072000000000001" ry="3.7800000000000002" fill="#8c9a3a"/><ellipse cx="752.57" cy="443.35" rx="8.840000000000002" ry="4.05" fill="#3c5a2a"/><rect x="781.3000000000001" y="423.1" width="44.2" height="27" fill="#26361f"/><rect x="781.3000000000001" y="423.1" width="44.2" height="10.26" fill="#c9cdc6"/><ellipse cx="798.98" cy="427.15000000000003" rx="13.26" ry="3.2399999999999998" fill="#e6e8e2"/><path d="M781.3000000000001 433.90000000000003 Q792.35 430.66 803.4000000000001 433.36 T825.5000000000001 432.82000000000005 L825.5000000000001 436.6 L781.3000000000001 436.6z" fill="#34442e"/><ellipse cx="807.82" cy="437.95000000000005" rx="7.072000000000001" ry="3.7800000000000002" fill="#8c9a3a"/><ellipse cx="796.7700000000001" cy="443.35" rx="8.840000000000002" ry="4.05" fill="#3c5a2a"/><rect x="825.5" y="423.1" width="44.2" height="27" fill="#26361f"/><rect x="825.5" y="423.1" width="44.2" height="10.26" fill="#c9cdc6"/><ellipse cx="843.18" cy="427.15000000000003" rx="13.26" ry="3.2399999999999998" fill="#e6e8e2"/><path d="M825.5 433.90000000000003 Q836.55 430.66 847.6 433.36 T869.7 432.82000000000005 L869.7 436.6 L825.5 436.6z" fill="#34442e"/><ellipse cx="852.02" cy="437.95000000000005" rx="7.072000000000001" ry="3.7800000000000002" fill="#8c9a3a"/><ellipse cx="840.97" cy="443.35" rx="8.840000000000002" ry="4.05" fill="#3c5a2a"/></g></g><rect x="737.7" y="423.70000000000005" width="131.70" height="25.80" rx="2.5" fill="none" stroke="#3d469c" stroke-width="1.2"/></svg>
<svg style="left:0;top:0" width="939" height="587" viewBox="0 0 939 587"><circle cx="177.9" cy="430.3" r="4.8" fill="#0b0b0e"/><polygon points="177.90,427.20 178.93,429.18 181.13,429.55 179.56,431.14 179.90,433.35 177.90,432.35 175.90,433.35 176.24,431.14 174.67,429.55 176.87,429.18" fill="#fff"/><circle cx="283.4" cy="430.3" r="4.8" fill="#0b0b0e"/><polygon points="283.40,427.20 284.43,429.18 286.63,429.55 285.06,431.14 285.40,433.35 283.40,432.35 281.40,433.35 281.74,431.14 280.17,429.55 282.37,429.18" fill="#fff"/><circle cx="322" cy="430.3" r="4.8" fill="#0b0b0e"/><polygon points="322.00,427.20 323.03,429.18 325.23,429.55 323.66,431.14 324.00,433.35 322.00,432.35 320.00,433.35 320.34,431.14 318.77,429.55 320.97,429.18" fill="#fff"/><circle cx="434.9" cy="430.3" r="4.8" fill="#0b0b0e"/><polygon points="434.90,427.20 435.93,429.18 438.13,429.55 436.56,431.14 436.90,433.35 434.90,432.35 432.90,433.35 433.24,431.14 431.67,429.55 433.87,429.18" fill="#fff"/><circle cx="523.4" cy="393.7" r="4.8" fill="#0b0b0e"/><polygon points="523.40,390.60 524.43,392.58 526.63,392.95 525.06,394.54 525.40,396.75 523.40,395.75 521.40,396.75 521.74,394.54 520.17,392.95 522.37,392.58" fill="#fff"/></svg>
<svg style="left:517px;top:386.6px" width="120.20" height="27.00" viewBox="517 386.6 120.20 27.00"><defs><clipPath id="c190"><rect x="517" y="386.6" width="120.20" height="27.00" rx="2.5"/></clipPath><filter id="fc190" x="-5%" y="-5%" width="110%" height="110%"><feGaussianBlur stdDeviation="0.6"/></filter></defs><g clip-path="url(#c190)"><g filter="url(#fc190)"><rect x="517" y="386.6" width="44" height="27" fill="#3f6440"/><rect x="517" y="386.6" width="44" height="8.1" fill="#cfd4d0"/><path d="M517 398.75 L525.8 392.0 L536.8 396.05 L547.8 389.84000000000003 L561 394.70000000000005 L561 413.6 L517 413.6z" fill="#4c7448"/><path d="M524.92 413.6 C525.8 400.1 529.32 392.0 537.24 392.54 C545.16 392.0 548.68 400.1 549.56 413.6z" fill="#d9c18e"/><ellipse cx="537.24" cy="402.8" rx="5.720000000000001" ry="8.1" fill="#ecccb4"/><rect x="561" y="386.6" width="44" height="27" fill="#3f6440"/><rect x="561" y="386.6" width="44" height="8.1" fill="#cfd4d0"/><path d="M561 398.75 L569.8 392.0 L580.8 396.05 L591.8 389.84000000000003 L605 394.70000000000005 L605 413.6 L561 413.6z" fill="#4c7448"/><path d="M568.92 413.6 C569.8 400.1 573.32 392.0 581.24 392.54 C589.16 392.0 592.68 400.1 593.56 413.6z" fill="#d9c18e"/><ellipse cx="581.24" cy="402.8" rx="5.720000000000001" ry="8.1" fill="#ecccb4"/><path d="M561 386.6 L574.2 386.6 L571.56 413.6 L561 413.6z" fill="#a36a58"/><rect x="605" y="386.6" width="44" height="27" fill="#3f6440"/><rect x="605" y="386.6" width="44" height="8.1" fill="#cfd4d0"/><path d="M605 398.75 L613.8 392.0 L624.8 396.05 L635.8 389.84000000000003 L649 394.70000000000005 L649 413.6 L605 413.6z" fill="#4c7448"/><path d="M612.92 413.6 C613.8 400.1 617.32 392.0 625.24 392.54 C633.16 392.0 636.68 400.1 637.56 413.6z" fill="#d9c18e"/><ellipse cx="625.24" cy="402.8" rx="5.720000000000001" ry="8.1" fill="#ecccb4"/><path d="M605 386.6 L618.2 386.6 L615.56 413.6 L605 413.6z" fill="#a36a58"/></g></g><rect x="517.6" y="387.20000000000005" width="119.00" height="25.80" rx="2.5" fill="none" stroke="#6470d4" stroke-width="1.2"/></svg>
<svg style="left:0;top:0" width="939" height="587" viewBox="0 0 939 587"><circle cx="523.4" cy="393.7" r="4.8" fill="#0b0b0e"/><polygon points="523.40,390.60 524.43,392.58 526.63,392.95 525.06,394.54 525.40,396.75 523.40,395.75 521.40,396.75 521.74,394.54 520.17,392.95 522.37,392.58" fill="#fff"/></svg>
<svg style="left:158.3px;top:440.1px" width="22.4" height="9.8" viewBox="0 0 22.4 9.8"><defs><pattern id="hp158" width="3" height="3" patternUnits="userSpaceOnUse" patternTransform="rotate(45)"><rect width="3" height="3" fill="#1b1c26"/><rect width="1" height="3" fill="#5a5c70"/></pattern></defs>
<rect x="0.5" y="0.5" width="21.4" height="8.8" rx="2" fill="#0a0a0c" stroke="#a8aab2" stroke-width="1"/>
<rect x="11.2" y="1" width="10.2" height="7.8" fill="url(#hp158)"/>
<path d="M9.2 1.2l2.8 3.7-2.8 3.7" fill="none" stroke="#e8e8ee" stroke-width="1.3"/></svg>
<svg style="left:264.6px;top:440.1px" width="22.4" height="9.8" viewBox="0 0 22.4 9.8"><defs><pattern id="hp264" width="3" height="3" patternUnits="userSpaceOnUse" patternTransform="rotate(45)"><rect width="3" height="3" fill="#1b1c26"/><rect width="1" height="3" fill="#5a5c70"/></pattern></defs>
<rect x="0.5" y="0.5" width="21.4" height="8.8" rx="2" fill="#0a0a0c" stroke="#a8aab2" stroke-width="1"/>
<rect x="11.2" y="1" width="10.2" height="7.8" fill="url(#hp264)"/>
<path d="M9.2 1.2l2.8 3.7-2.8 3.7" fill="none" stroke="#e8e8ee" stroke-width="1.3"/></svg>
<svg style="left:415.4px;top:440.1px" width="22.4" height="9.8" viewBox="0 0 22.4 9.8"><defs><pattern id="hp415" width="3" height="3" patternUnits="userSpaceOnUse" patternTransform="rotate(45)"><rect width="3" height="3" fill="#1b1c26"/><rect width="1" height="3" fill="#5a5c70"/></pattern></defs>
<rect x="0.5" y="0.5" width="21.4" height="8.8" rx="2" fill="#0a0a0c" stroke="#a8aab2" stroke-width="1"/>
<rect x="11.2" y="1" width="10.2" height="7.8" fill="url(#hp415)"/>
<path d="M9.2 1.2l2.8 3.7-2.8 3.7" fill="none" stroke="#e8e8ee" stroke-width="1.3"/></svg>
<svg style="left:498.6px;top:440.1px" width="22.4" height="9.8" viewBox="0 0 22.4 9.8"><defs><pattern id="hp498" width="3" height="3" patternUnits="userSpaceOnUse" patternTransform="rotate(45)"><rect width="3" height="3" fill="#1b1c26"/><rect width="1" height="3" fill="#5a5c70"/></pattern></defs>
<rect x="0.5" y="0.5" width="21.4" height="8.8" rx="2" fill="#0a0a0c" stroke="#a8aab2" stroke-width="1"/>
<rect x="11.2" y="1" width="10.2" height="7.8" fill="url(#hp498)"/>
<path d="M9.2 1.2l2.8 3.7-2.8 3.7" fill="none" stroke="#e8e8ee" stroke-width="1.3"/></svg>
<svg style="left:724.3px;top:440.1px" width="22.4" height="9.8" viewBox="0 0 22.4 9.8"><defs><pattern id="hp724" width="3" height="3" patternUnits="userSpaceOnUse" patternTransform="rotate(45)"><rect width="3" height="3" fill="#1b1c26"/><rect width="1" height="3" fill="#5a5c70"/></pattern></defs>
<rect x="0.5" y="0.5" width="21.4" height="8.8" rx="2" fill="#0a0a0c" stroke="#a8aab2" stroke-width="1"/>
<rect x="11.2" y="1" width="10.2" height="7.8" fill="url(#hp724)"/>
<path d="M9.2 1.2l2.8 3.7-2.8 3.7" fill="none" stroke="#e8e8ee" stroke-width="1.3"/></svg>
<svg style="left:170.9px;top:459.7px" width="216.90" height="20.40" viewBox="170.9 459.7 216.90 20.40"><defs><clipPath id="a197"><rect x="170.9" y="459.7" width="216.90" height="20.40" rx="2.5"/></clipPath></defs><g clip-path="url(#a197)"><rect x="170.9" y="459.7" width="216.9" height="20.400000000000034" fill="#16a08b"/><polygon points="170.9,480.1 170.9,468.8 171.7,472.3 172.4,473.5 173.2,473.3 173.9,473.8 174.7,473.1 175.4,474.2 176.2,472.7 176.9,472.3 177.7,471.7 178.4,471.5 179.2,469.7 179.9,465.0 180.7,471.3 181.4,471.2 182.2,471.2 182.9,468.3 183.7,471.8 184.4,471.9 185.2,472.7 185.9,472.8 186.7,472.9 187.4,473.7 188.2,473.4 188.9,470.4 189.7,469.2 190.4,472.8 191.2,472.8 191.9,468.7 192.7,472.2 193.4,472.9 194.2,466.5 194.9,474.0 195.7,474.0 196.4,473.0 197.2,470.3 197.9,468.7 198.7,464.8 199.4,472.4 200.2,472.6 200.9,472.9 201.7,472.2 202.4,473.1 203.2,468.9 203.9,469.7 204.7,472.4 205.4,470.5 206.2,472.5 206.9,474.3 207.7,464.9 208.4,469.8 209.2,472.5 209.9,471.4 210.7,472.5 211.4,472.8 212.2,473.1 212.9,474.1 213.7,473.0 214.4,466.7 215.2,472.1 215.9,472.2 216.7,471.6 217.4,470.8 218.2,471.2 218.9,470.7 219.7,472.1 220.4,470.8 221.2,470.2 221.9,472.4 222.7,471.9 223.4,472.1 224.2,469.8 224.9,471.4 225.7,469.9 226.4,468.0 227.2,468.6 227.9,470.2 228.7,468.3 229.4,469.6 230.2,470.3 230.9,470.6 231.7,465.3 232.4,471.0 233.2,472.2 233.9,472.7 234.7,473.0 235.4,473.0 236.2,472.4 236.9,469.2 237.7,463.7 238.4,467.3 239.2,471.8 239.9,470.9 240.7,471.5 241.4,464.4 242.2,472.2 242.9,469.2 243.7,470.5 244.4,471.1 245.2,471.5 245.9,470.7 246.7,468.4 247.4,470.7 248.2,471.5 248.9,470.7 249.7,470.6 250.4,473.2 251.2,469.2 251.9,470.5 252.7,474.8 253.4,475.2 254.2,473.1 254.9,465.1 255.7,470.3 256.4,468.7 257.1,473.8 257.9,473.4 258.6,469.2 259.4,472.3 260.1,469.1 260.9,472.6 261.6,468.8 262.4,471.4 263.1,472.7 263.9,473.3 264.6,466.1 265.4,474.4 266.1,473.5 266.9,469.6 267.6,473.8 268.4,475.3 269.1,468.6 269.9,470.4 270.6,474.2 271.4,474.3 272.1,470.4 272.9,470.6 273.6,474.8 274.4,468.8 275.1,469.2 275.9,468.5 276.6,469.2 277.4,472.9 278.1,468.5 278.9,472.7 279.6,472.7 280.4,470.5 281.1,473.5 281.9,470.2 282.6,470.2 283.4,471.3 284.1,472.6 284.9,471.4 285.6,465.1 286.4,472.8 287.1,470.0 287.9,473.5 288.6,473.4 289.4,468.7 290.1,473.8 290.9,466.0 291.6,469.5 292.4,472.8 293.1,472.6 293.9,467.1 294.6,471.3 295.4,471.9 296.1,470.8 296.9,470.3 297.6,473.1 298.4,469.4 299.1,473.7 299.9,472.9 300.6,468.3 301.4,472.9 302.1,473.9 302.9,474.1 303.6,474.6 304.4,474.7 305.1,473.9 305.9,470.4 306.6,472.8 307.4,468.6 308.1,473.5 308.9,472.8 309.6,472.4 310.4,469.6 311.1,473.7 311.9,472.1 312.6,472.1 313.4,470.5 314.1,472.1 314.9,473.7 315.6,472.6 316.4,468.7 317.1,468.5 317.9,468.3 318.6,468.7 319.4,471.7 320.1,470.2 320.9,473.1 321.6,472.8 322.4,469.6 323.1,468.0 323.9,471.5 324.6,472.5 325.4,472.1 326.1,473.9 326.9,474.1 327.6,472.4 328.4,474.1 329.1,472.4 329.9,473.3 330.6,473.1 331.4,474.4 332.1,473.2 332.9,464.2 333.6,473.4 334.4,473.8 335.1,471.9 335.9,470.1 336.6,471.9 337.4,472.6 338.1,470.2 338.9,472.8 339.6,468.7 340.4,465.0 341.1,467.4 341.9,468.9 342.6,469.2 343.4,473.2 344.1,471.8 344.9,472.1 345.6,473.0 346.4,471.3 347.1,471.0 347.9,470.6 348.6,472.5 349.4,471.4 350.1,472.1 350.9,474.0 351.6,474.5 352.4,468.8 353.1,470.3 353.9,472.8 354.6,471.1 355.4,465.9 356.1,471.6 356.9,468.4 357.6,466.4 358.4,471.1 359.1,472.4 359.9,468.6 360.6,472.8 361.4,471.5 362.1,471.9 362.9,469.6 363.6,471.4 364.4,471.2 365.1,473.1 365.9,472.8 366.6,470.5 367.4,468.7 368.1,472.5 368.9,469.4 369.6,470.5 370.4,464.6 371.1,470.9 371.9,471.1 372.6,463.7 373.4,470.5 374.1,470.1 374.9,470.1 375.6,471.5 376.4,466.2 377.1,470.4 377.9,472.6 378.6,472.3 379.4,471.5 380.1,470.8 380.9,471.3 381.6,470.8 382.4,471.6 383.1,470.7 383.9,472.0 384.6,471.3 385.4,472.6 386.1,471.2 386.9,471.2 387.6,470.1 387.8,480.1" fill="#4fd6c4"/><text x="176.4" y="472.8" font-family="Liberation Sans" font-size="7.4" fill="#e6f4f2">Soundtrack_12.wma</text></g></svg>
<svg style="left:428.3px;top:459.7px" width="441.70" height="20.40" viewBox="428.3 459.7 441.70 20.40"><defs><clipPath id="a198"><rect x="428.3" y="459.7" width="441.70" height="20.40" rx="2.5"/></clipPath></defs><g clip-path="url(#a198)"><rect x="428.3" y="459.7" width="441.7" height="20.400000000000034" fill="#16a08b"/><polygon points="428.3,480.1 428.3,468.5 429.1,473.4 429.8,472.3 430.6,473.6 431.3,469.2 432.1,466.8 432.8,468.7 433.6,472.6 434.3,464.1 435.1,473.7 435.8,474.0 436.6,468.4 437.3,473.4 438.1,469.1 438.8,472.5 439.6,472.6 440.3,473.1 441.1,467.6 441.8,472.2 442.6,471.5 443.3,471.5 444.1,470.7 444.8,472.2 445.6,471.2 446.3,470.0 447.1,470.0 447.8,470.8 448.6,472.4 449.3,471.5 450.1,472.8 450.8,469.8 451.6,471.3 452.3,471.0 453.1,469.6 453.8,471.4 454.6,470.7 455.3,469.0 456.1,470.3 456.8,469.1 457.6,472.4 458.3,468.6 459.1,472.5 459.8,473.0 460.6,463.9 461.3,470.9 462.1,472.2 462.8,470.5 463.6,470.7 464.3,465.0 465.1,468.8 465.8,471.3 466.6,471.5 467.3,471.1 468.1,470.6 468.8,471.0 469.6,471.8 470.3,470.6 471.1,470.2 471.8,470.6 472.6,471.3 473.3,470.7 474.1,470.5 474.8,465.8 475.6,471.5 476.3,470.6 477.1,463.7 477.8,469.8 478.6,465.4 479.3,471.2 480.1,466.6 480.8,471.0 481.6,468.5 482.3,463.6 483.1,470.3 483.8,469.9 484.6,470.8 485.3,469.1 486.1,472.0 486.8,471.3 487.6,470.8 488.3,468.3 489.1,465.3 489.8,468.6 490.6,471.4 491.3,471.4 492.1,468.7 492.8,468.9 493.6,472.9 494.3,472.4 495.1,472.8 495.8,473.3 496.6,473.7 497.3,473.2 498.1,469.6 498.8,470.5 499.6,469.7 500.3,473.8 501.1,472.8 501.8,473.4 502.6,474.4 503.3,474.3 504.1,473.7 504.8,468.4 505.6,474.3 506.3,473.5 507.1,469.7 507.8,473.1 508.6,465.5 509.3,473.3 510.1,472.8 510.8,472.9 511.6,473.3 512.3,473.4 513.0,471.3 513.8,471.4 514.5,473.5 515.3,473.3 516.0,468.0 516.8,464.5 517.5,473.7 518.3,472.0 519.0,473.3 519.8,473.7 520.5,468.5 521.3,470.6 522.0,468.4 522.8,473.0 523.5,473.4 524.3,474.1 525.0,473.4 525.8,468.4 526.5,466.3 527.3,473.3 528.0,473.1 528.8,469.1 529.5,474.3 530.3,468.3 531.0,470.5 531.8,472.8 532.5,470.1 533.3,474.0 534.0,473.1 534.8,473.6 535.5,468.4 536.3,474.5 537.0,469.2 537.8,474.0 538.5,469.4 539.3,468.5 540.0,472.0 540.8,470.5 541.5,474.3 542.3,473.6 543.0,472.0 543.8,472.0 544.5,471.8 545.3,470.0 546.0,473.3 546.8,472.3 547.5,470.3 548.3,464.9 549.0,472.4 549.8,468.6 550.5,473.9 551.3,472.5 552.0,473.0 552.8,472.9 553.5,472.8 554.3,471.7 555.0,471.1 555.8,470.1 556.5,472.6 557.3,466.2 558.0,472.3 558.8,467.4 559.5,468.3 560.3,472.3 561.0,470.9 561.8,465.7 562.5,472.0 563.3,469.0 564.0,464.6 564.8,470.3 565.5,471.0 566.3,471.7 567.0,470.2 567.8,471.0 568.5,471.7 569.3,469.9 570.0,469.5 570.8,471.8 571.5,471.6 572.3,468.6 573.0,469.8 573.8,471.0 574.5,472.2 575.3,468.9 576.0,471.3 576.8,472.7 577.5,472.8 578.3,474.5 579.0,474.1 579.8,474.5 580.5,475.6 581.3,474.0 582.0,475.8 582.8,468.5 583.5,468.6 584.3,474.5 585.0,473.9 585.8,473.3 586.5,474.8 587.3,470.4 588.0,473.0 588.8,470.1 589.5,465.7 590.3,472.5 591.0,472.9 591.8,471.7 592.5,470.8 593.3,471.2 594.0,470.2 594.8,465.4 595.5,468.4 596.3,471.6 597.0,472.6 597.8,473.0 598.5,472.7 599.3,470.2 600.0,472.2 600.8,471.0 601.5,471.2 602.3,472.8 603.0,466.4 603.8,471.6 604.5,470.6 605.3,470.4 606.0,471.0 606.8,466.2 607.5,469.3 608.3,469.9 609.0,464.7 609.8,472.0 610.5,466.3 611.3,473.8 612.0,474.0 612.8,469.0 613.5,473.2 614.3,469.7 615.0,472.2 615.8,465.7 616.5,472.2 617.3,470.5 618.0,470.0 618.8,472.3 619.5,465.6 620.3,471.8 621.0,473.2 621.8,473.3 622.5,472.8 623.3,472.1 624.0,471.7 624.8,469.7 625.5,473.3 626.3,471.4 627.0,473.2 627.8,472.5 628.5,472.7 629.3,472.3 630.0,471.6 630.8,468.7 631.5,469.1 632.3,472.5 633.0,469.2 633.8,470.5 634.5,472.6 635.3,472.3 636.0,467.5 636.8,467.8 637.5,469.2 638.3,472.9 639.0,473.6 639.8,473.0 640.5,469.2 641.3,471.6 642.0,471.1 642.8,470.4 643.5,471.6 644.3,470.2 645.0,471.6 645.8,472.1 646.5,469.2 647.3,464.7 648.0,471.4 648.8,471.0 649.5,470.5 650.3,468.8 651.0,471.1 651.8,470.4 652.5,464.0 653.3,473.6 654.0,473.7 654.8,463.6 655.5,474.8 656.3,469.5 657.0,474.2 657.8,474.3 658.5,473.1 659.3,468.6 660.0,472.3 660.8,473.5 661.5,474.2 662.3,469.7 663.0,474.0 663.8,473.1 664.5,469.6 665.3,473.4 666.0,469.3 666.8,471.9 667.5,473.3 668.3,473.1 669.0,465.3 669.8,465.6 670.5,471.9 671.3,473.8 672.0,471.3 672.8,471.7 673.5,472.0 674.3,472.1 675.0,473.6 675.8,473.3 676.5,472.7 677.3,465.9 678.0,468.8 678.8,472.9 679.5,472.3 680.3,473.2 681.0,468.9 681.8,474.6 682.5,466.8 683.3,470.0 684.0,472.1 684.8,469.1 685.5,473.2 686.3,472.6 687.0,472.6 687.8,468.5 688.5,473.3 689.3,473.8 690.0,473.5 690.8,469.9 691.5,473.4 692.3,472.1 693.0,471.1 693.8,471.9 694.5,471.7 695.3,469.2 696.0,472.5 696.8,465.2 697.5,471.2 698.3,472.0 699.0,469.4 699.8,471.8 700.5,473.6 701.3,472.5 702.0,469.1 702.8,469.0 703.5,468.8 704.3,470.6 705.0,472.4 705.8,472.0 706.5,463.8 707.3,469.5 708.0,473.8 708.8,471.9 709.5,467.1 710.3,471.3 711.0,470.4 711.8,470.5 712.5,470.8 713.3,472.2 714.0,472.0 714.8,473.0 715.5,473.2 716.3,472.5 717.0,469.1 717.8,474.2 718.5,473.6 719.3,473.8 720.0,475.0 720.8,474.7 721.5,467.6 722.3,474.2 723.0,468.5 723.8,469.5 724.5,468.9 725.3,467.7 726.0,473.3 726.8,474.1 727.5,472.8 728.3,472.2 729.0,467.0 729.8,471.5 730.5,472.0 731.3,471.0 732.0,472.1 732.8,471.7 733.5,473.2 734.3,468.3 735.0,468.9 735.8,473.3 736.5,472.9 737.3,473.7 738.0,465.0 738.8,472.2 739.5,471.3 740.3,469.3 741.0,469.9 741.8,472.5 742.5,469.3 743.3,473.5 744.0,463.9 744.8,470.8 745.5,470.3 746.3,470.7 747.0,470.2 747.8,469.3 748.5,469.8 749.3,469.8 750.0,470.8 750.8,470.2 751.5,470.4 752.3,468.3 753.0,469.4 753.8,470.8 754.5,464.0 755.3,472.3 756.0,466.5 756.8,469.1 757.5,471.9 758.3,470.9 759.0,471.3 759.8,469.7 760.5,471.0 761.3,468.9 762.0,472.0 762.8,469.4 763.5,472.8 764.3,473.2 765.0,472.5 765.8,472.3 766.5,466.3 767.3,468.7 768.0,470.8 768.8,472.2 769.5,468.7 770.3,471.9 771.0,468.4 771.8,472.5 772.5,466.5 773.3,472.3 774.0,472.3 774.8,472.4 775.5,471.9 776.3,471.8 777.0,470.0 777.8,474.0 778.5,469.1 779.3,471.6 780.0,470.4 780.8,469.6 781.5,470.4 782.3,472.8 783.0,472.3 783.8,473.6 784.5,471.9 785.3,469.9 786.0,470.4 786.8,472.6 787.5,468.5 788.3,472.1 789.0,473.1 789.8,473.6 790.5,468.7 791.3,472.4 792.0,471.2 792.8,470.8 793.5,469.3 794.3,471.7 795.0,470.7 795.8,464.7 796.5,471.4 797.3,469.1 798.0,472.1 798.8,473.3 799.5,471.0 800.3,470.7 801.0,472.0 801.8,473.5 802.5,470.6 803.3,472.6 804.0,472.7 804.8,464.1 805.5,469.5 806.3,472.1 807.0,472.2 807.8,471.9 808.5,472.5 809.3,470.4 810.0,468.7 810.8,471.4 811.5,472.9 812.3,470.1 813.0,468.3 813.8,471.5 814.5,470.1 815.3,467.7 816.0,470.1 816.8,470.5 817.5,470.7 818.3,470.1 819.0,469.0 819.8,471.3 820.5,465.8 821.3,470.5 822.0,469.7 822.8,471.0 823.5,470.3 824.3,470.4 825.0,471.4 825.8,472.6 826.5,469.6 827.3,470.7 828.0,469.3 828.8,471.6 829.5,471.8 830.3,467.1 831.0,470.4 831.8,470.8 832.5,468.8 833.3,470.7 834.0,470.3 834.8,471.3 835.5,470.7 836.3,470.2 837.0,473.1 837.8,472.2 838.5,469.5 839.3,471.9 840.0,470.1 840.8,471.9 841.5,472.6 842.3,474.0 843.0,464.6 843.8,467.5 844.5,472.4 845.3,473.1 846.0,468.3 846.8,470.8 847.5,468.9 848.3,471.8 849.0,473.4 849.8,470.6 850.5,463.9 851.3,472.9 852.0,473.1 852.8,472.7 853.5,472.6 854.3,469.7 855.0,468.3 855.8,473.1 856.5,468.6 857.3,472.9 858.0,468.9 858.8,470.2 859.5,474.1 860.3,472.9 861.0,472.9 861.8,472.8 862.5,472.5 863.3,470.0 864.0,472.3 864.8,468.7 865.5,472.4 866.3,471.3 867.0,472.7 867.8,473.9 868.5,472.0 869.3,468.6 870,480.1" fill="#4fd6c4"/><text x="433.8" y="472.8" font-family="Liberation Sans" font-size="7.4" fill="#e6f4f2">Soundtrack_13.wma</text></g></svg>
<svg style="left:133px;top:489.1px" width="36.50" height="20.20" viewBox="133 489.1 36.50 20.20"><defs><clipPath id="a199"><rect x="133" y="489.1" width="36.50" height="20.20" rx="2.5"/></clipPath></defs><g clip-path="url(#a199)"><rect x="133" y="489.1" width="36.5" height="20.19999999999999" fill="#16a08b"/><polygon points="133,509.3 133.0,501.7 133.8,501.5 134.5,503.4 135.2,502.1 136.0,498.5 136.8,498.1 137.5,499.4 138.2,503.2 139.0,497.7 139.8,501.5 140.5,498.2 141.2,503.2 142.0,502.2 142.8,501.6 143.5,501.4 144.2,500.7 145.0,501.2 145.8,503.0 146.5,495.6 147.2,499.3 148.0,502.0 148.8,498.9 149.5,501.1 150.2,501.0 151.0,497.9 151.8,502.3 152.5,502.4 153.2,503.3 154.0,498.6 154.8,502.4 155.5,496.9 156.2,499.1 157.0,498.7 157.8,502.9 158.5,497.1 159.2,502.8 160.0,502.6 160.8,495.3 161.5,498.1 162.2,499.8 163.0,503.3 163.8,498.4 164.5,501.8 165.2,503.3 166.0,503.4 166.8,503.7 167.5,498.0 168.2,504.9 169.0,502.4 169.5,509.3" fill="#4fd6c4"/></g></svg>
<div class="abs" style="left:171px;top:450px;width:1px;height:10px;background:#2cb8a0"></div>
<div class="abs" style="left:428px;top:450px;width:1px;height:10px;background:#2cb8a0"></div>
<div class="abs" style="left:517px;top:413.5px;width:1px;height:10px;background:#6470d4"></div>
<div class="abs" style="left:566.2px;top:376.6px;width:1.2px;height:10px;background:#7e4ad0"></div>
<div class="abs" style="left:566.2px;top:413.5px;width:1.2px;height:10px;background:#7e4ad0"></div>
<svg style="left:564px;top:358.5px" width="36" height="18.5" viewBox="0 0 36 18.5">
<rect x="1" y="1" width="34" height="16.5" rx="3.2" fill="#6a2ec2" stroke="#f2c124" stroke-width="1.8"/>
<path d="M1 4.4v10M35 4.4v10" stroke="#4a3a20" stroke-width="0.8" stroke-dasharray="1.1 1.3"/>
<rect x="4.2" y="1.9" width="23" height="4" fill="#f2eef6"/><circle cx="27.6" cy="4" r="2.1" fill="#6a2ec2" stroke="#ece6f4" stroke-width="0.9"/>
<path d="M15.6 10.4A4 4 0 1 1 11.2 6.4" fill="none" stroke="#d8c8f0" stroke-width="0.9"/><path d="M11.2 6.4c-.1 2.4 2 4.2 4.4 4" fill="none" stroke="#d8c8f0" stroke-width="0.9"/>
</svg>
<div class="t" style="left:584.8px;top:365.4px;font-size:6px;color:#f0ecf6;font-weight:bold">貼子</div>
</div>
<div class="abs" style="left:574px;top:335px;width:1px;height:184px;background:#cf4658"></div>
<svg style="left:571px;top:326.5px" width="7" height="10" viewBox="0 0 7 10"><path d="M0.3 1.2a1 1 0 0 1 1-1h4.4a1 1 0 0 1 1 1V6.5L3.5 9.5 0.3 6.5z" fill="#f04a5c"/></svg>
<div class="abs" style="left:834px;top:366.6px;width:3.5px;height:150px;background:#494c60;border-radius:1.5px"></div>
<div class="abs" style="left:301px;top:518px;width:375px;height:3px;background:#4a4e66;border-radius:1.5px"></div>
<svg style="left:0;top:0" width="939" height="587" viewBox="0 0 939 587"><path d="M106 354.3h7M109.5 354.3v8.5" stroke="#5a5d6a" stroke-width="0.9" fill="none"/><path d="M121.5 353.9c1.4-2.2 4.6-2.2 6 0c-1.4 2.2-4.6 2.2-6 0z" fill="none" stroke="#a2a5b1" stroke-width="1"/><circle cx="124.5" cy="353.9" r="1.2" fill="#a2a5b1"/><path d="M123.9 360.9h-1a1.6 1.6 0 0 0 0 3.2h1M125.1 360.9h1a1.6 1.6 0 0 1 0 3.2h-1M123.5 362.5h2" fill="none" stroke="#a2a5b1" stroke-width="1"/><rect x="105.5" y="395.59999999999997" width="1.6" height="1.6" fill="#585b68"/><rect x="111.9" y="395.59999999999997" width="1.6" height="1.6" fill="#585b68"/><rect x="105.5" y="399.2" width="1.6" height="1.6" fill="#585b68"/><rect x="111.9" y="399.2" width="1.6" height="1.6" fill="#585b68"/><rect x="105.5" y="402.8" width="1.6" height="1.6" fill="#585b68"/><rect x="111.9" y="402.8" width="1.6" height="1.6" fill="#585b68"/><rect x="107.9" y="395.6" width="3.2" height="4" fill="#585b68"/><rect x="107.9" y="400.4" width="3.2" height="4" fill="#585b68"/><path d="M121.5 391.5c1.4-2.2 4.6-2.2 6 0c-1.4 2.2-4.6 2.2-6 0z" fill="none" stroke="#a2a5b1" stroke-width="1"/><circle cx="124.5" cy="391.5" r="1.2" fill="#a2a5b1"/><path d="M121.5 399.2h1.3l1.9-1.7v5.4l-1.9-1.7h-1.3z" fill="none" stroke="#a2a5b1" stroke-width="0.9"/><path d="M126.0 398.7v3M127.3 398.0v4.4" stroke="#a2a5b1" stroke-width="0.8"/><path d="M123.9 407.2h-1a1.6 1.6 0 0 0 0 3.2h1M125.1 407.2h1a1.6 1.6 0 0 1 0 3.2h-1M123.5 408.8h2" fill="none" stroke="#a2a5b1" stroke-width="1"/><rect x="105.5" y="432.4" width="1.6" height="1.6" fill="#585b68"/><rect x="111.9" y="432.4" width="1.6" height="1.6" fill="#585b68"/><rect x="105.5" y="436.0" width="1.6" height="1.6" fill="#585b68"/><rect x="111.9" y="436.0" width="1.6" height="1.6" fill="#585b68"/><rect x="105.5" y="439.6" width="1.6" height="1.6" fill="#585b68"/><rect x="111.9" y="439.6" width="1.6" height="1.6" fill="#585b68"/><rect x="107.9" y="432.40000000000003" width="3.2" height="4" fill="#585b68"/><rect x="107.9" y="437.2" width="3.2" height="4" fill="#585b68"/><path d="M121.5 432c1.4-2.2 4.6-2.2 6 0c-1.4 2.2-4.6 2.2-6 0z" fill="none" stroke="#a2a5b1" stroke-width="1"/><circle cx="124.5" cy="432" r="1.2" fill="#a2a5b1"/><path d="M121.5 440.4h1.3l1.9-1.7v5.4l-1.9-1.7h-1.3z" fill="none" stroke="#a2a5b1" stroke-width="0.9"/><path d="M126.0 439.9v3M127.3 439.2v4.4" stroke="#a2a5b1" stroke-width="0.8"/><path d="M107.7 473.4v-6.5l5-1.2v6.5" fill="none" stroke="#5a5d6a" stroke-width="0.9"/><ellipse cx="106.7" cy="473.59999999999997" rx="1.3" ry="1" fill="#5a5d6a"/><ellipse cx="111.5" cy="472.4" rx="1.3" ry="1" fill="#5a5d6a"/><path d="M121.5 464.8h1.3l1.9-1.7v5.4l-1.9-1.7h-1.3z" fill="none" stroke="#a2a5b1" stroke-width="0.9"/><path d="M126.0 464.3v3M127.3 463.6v4.4" stroke="#a2a5b1" stroke-width="0.8"/><path d="M123.9 473.0h-1a1.6 1.6 0 0 0 0 3.2h1M125.1 473.0h1a1.6 1.6 0 0 1 0 3.2h-1M123.5 474.6h2" fill="none" stroke="#a2a5b1" stroke-width="1"/><path d="M107.7 502.3v-6.5l5-1.2v6.5" fill="none" stroke="#5a5d6a" stroke-width="0.9"/><ellipse cx="106.7" cy="502.5" rx="1.3" ry="1" fill="#5a5d6a"/><ellipse cx="111.5" cy="501.3" rx="1.3" ry="1" fill="#5a5d6a"/><path d="M121.5 494h1.3l1.9-1.7v5.4l-1.9-1.7h-1.3z" fill="none" stroke="#a2a5b1" stroke-width="0.9"/><path d="M126.0 493.5v3M127.3 492.8v4.4" stroke="#a2a5b1" stroke-width="0.8"/><path d="M123.7 502.09999999999997h-1.2a1.8 1.8 0 0 0 0 3.6M125.3 505.7h1.2a1.8 1.8 0 0 0 0-3.6M122.5 506.4l4-5" fill="none" stroke="#a2a5b1" stroke-width="0.9"/></svg>
<div class="t" style="left:108.8px;top:528.2px;font-size:7px;color:#a3a6b0;font-weight:500">刻度:</div>
<svg style="left:143px;top:526px" width="72" height="9" viewBox="143 526 72 9"><path d="M144.7 532l2-1.8 1.2 1 1.5-1.2 1.4 2z" fill="#6a6d78"/><path d="M154.3 530.9h44.7" stroke="#3e414c" stroke-width="0.9"/><path d="M203.5 532.2l3-2.8 1.8 1.4 2.2-1.8 2.1 3.2z" fill="#6a6d78"/></svg>
<div class="abs" style="left:179px;top:527.9px;width:6.2px;height:6.2px;background:#2d8fe8;border-radius:50%;border:1px solid #9ccaf5"></div>
<div class="t" style="left:375px;top:528.2px;font-size:7px;color:#a3a6b0;font-weight:500">專案長度:</div>
<div class="t" style="left:411.5px;top:528px;font-size:7.6px;color:#a3a6b0;">01:33</div>
</body></html>
